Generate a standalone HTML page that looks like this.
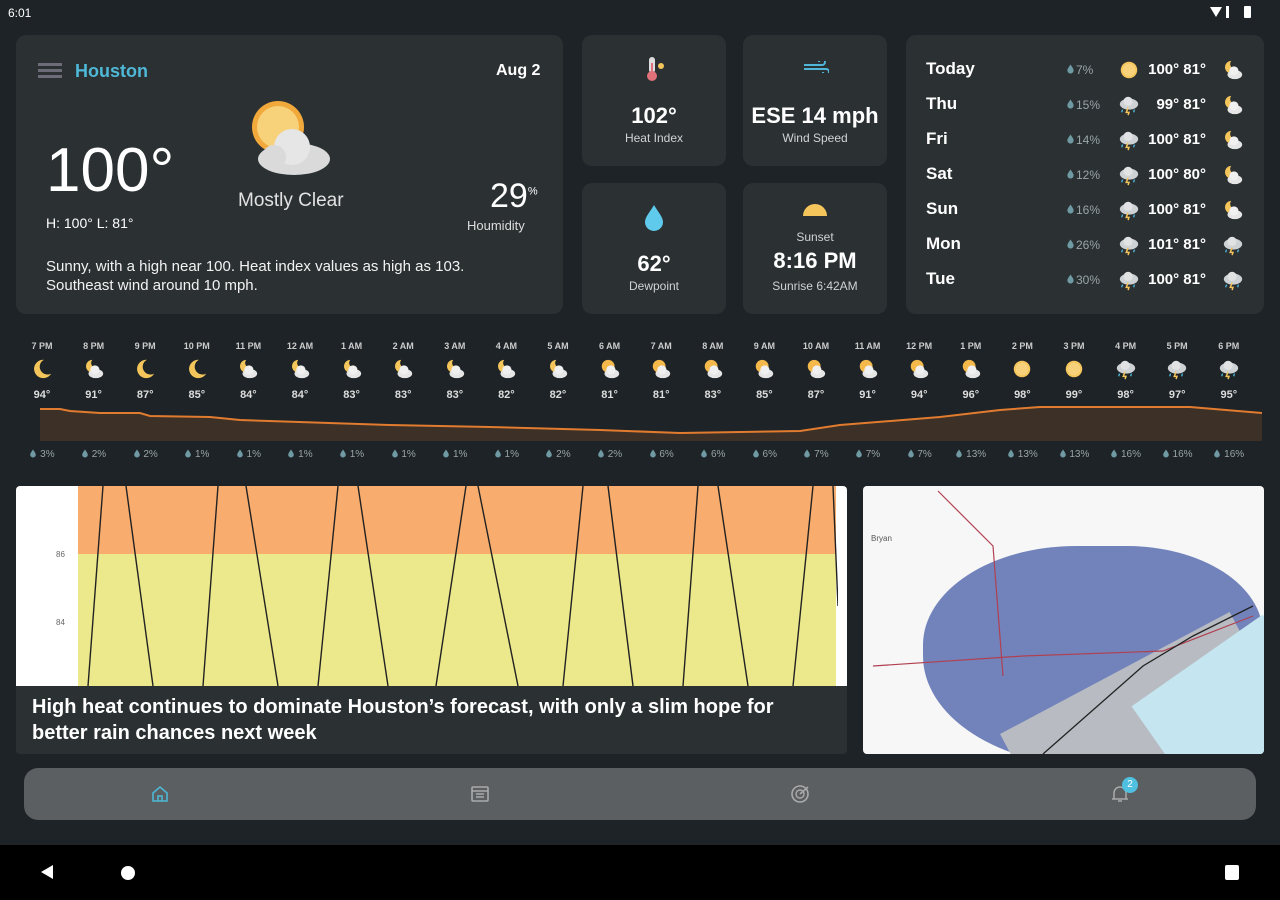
<!DOCTYPE html>
<html><head><meta charset="utf-8">
<style>
*{margin:0;padding:0;box-sizing:border-box}
body{width:1280px;height:900px;background:#1d2326;font-family:"Liberation Sans",sans-serif;color:#fff;position:relative;overflow:hidden}
.a{position:absolute}
.card{position:absolute;background:#2b3033;border-radius:10px}
.c{text-align:center}
.small{font-size:12px;color:#d0d3d4}
.hr{position:absolute;width:50px;text-align:center}
</style></head><body>
<svg width="0" height="0" style="position:absolute">
<defs>
<symbol id="moon" viewBox="0 0 24 24"><path d="M14 2a10 10 0 1 0 8 15A8 8 0 0 1 14 2z" fill="#f4c55b"/></symbol>
<symbol id="pc" viewBox="0 0 24 24"><path d="M10 2a7 7 0 1 0 7 9A6 6 0 0 1 10 2z" fill="#f4c55b"/><ellipse cx="14" cy="17" rx="8" ry="5" fill="#e6e6e6"/><circle cx="13" cy="13" r="5" fill="#f0f0f0"/></symbol>
<symbol id="ps" viewBox="0 0 24 24"><circle cx="10" cy="9" r="7" fill="#f4b94a"/><ellipse cx="14" cy="17" rx="8" ry="5" fill="#e6e6e6"/><circle cx="13" cy="13" r="5" fill="#f0f0f0"/></symbol>
<symbol id="sun" viewBox="0 0 24 24"><circle cx="12" cy="12" r="9" fill="#f4c55b"/><circle cx="12" cy="12" r="7" fill="#f8d27a"/></symbol>
<symbol id="st" viewBox="0 0 24 24"><ellipse cx="12" cy="11" rx="10" ry="6" fill="#cfd2d4"/><circle cx="11" cy="8" r="5" fill="#e0e2e3"/><path d="M11 15l-2 5h3l-1 3" stroke="#f4c55b" stroke-width="1.6" fill="none"/><path d="M5 17l-1 3M18 17l-1 3" stroke="#4fb6d8" stroke-width="1.5"/></symbol>
<symbol id="drop" viewBox="0 0 10 10"><path d="M5 0C3 3 1.5 5 1.5 6.5a3.5 3.5 0 0 0 7 0C8.5 5 7 3 5 0z" fill="#6f9aa3"/></symbol>
</defs></svg>

<!-- status bar -->
<div class="a" style="left:8px;top:6px;font-size:12px">6:01</div>
<div class="a" style="left:1210px;top:7px;width:12px;height:10px;background:#fff;clip-path:polygon(0 0,100% 0,50% 100%)"></div>
<div class="a" style="left:1226px;top:6px;width:3px;height:12px;background:#fff"></div>
<div class="a" style="left:1244px;top:6px;width:7px;height:12px;background:#fff;border-radius:1px"></div>

<!-- main card -->
<div class="card" style="left:16px;top:35px;width:547px;height:279px">
  <div class="a" style="left:22px;top:28px;width:24px;height:3px;background:#6e6b78;box-shadow:0 6px 0 #6e6b78,0 12px 0 #6e6b78"></div>
  <div class="a" style="left:59px;top:26px;font-size:18px;font-weight:bold;color:#4fb8d6">Houston</div>
  <div class="a" style="left:480px;top:27px;font-size:16px;font-weight:bold">Aug 2</div>
  <svg class="a" style="left:228px;top:60px" width="90" height="82" viewBox="0 0 90 82"><circle cx="34" cy="32" r="26" fill="#f1a93c"/><circle cx="34" cy="32" r="21" fill="#f8d27a"/><ellipse cx="50" cy="64" rx="36" ry="16" fill="#dadada"/><circle cx="48" cy="52" r="18" fill="#e6e6e6"/><circle cx="30" cy="62" r="12" fill="#dadada"/></svg>
  <div class="a" style="left:30px;top:100px;font-size:62px;font-weight:300">100°</div>
  <div class="a" style="left:30px;top:180px;font-size:14px">H: 100° L: 81°</div>
  <div class="a" style="left:222px;top:155px;font-size:19px;color:#e2e2e2">Mostly Clear</div>
  <div class="a" style="left:474px;top:142px;font-size:34px">29<sup style="font-size:11px">%</sup></div>
  <div class="a" style="left:451px;top:183px;font-size:13px;color:#ddd">Houmidity</div>
  <div class="a" style="left:30px;top:222px;font-size:15px;line-height:19px;color:#f2f2f2">Sunny, with a high near 100. Heat index values as high as 103.<br>Southeast wind around 10 mph.</div>
</div>

<!-- small cards -->
<div class="card" style="left:582px;top:35px;width:144px;height:131px">
  <svg class="a" style="left:60px;top:20px" width="24" height="28" viewBox="0 0 24 28"><rect x="7" y="2" width="6" height="16" rx="3" fill="#ddd"/><circle cx="10" cy="21" r="5" fill="#e0707a"/><rect x="9" y="8" width="2" height="12" fill="#e0707a"/><circle cx="19" cy="11" r="3" fill="#f4c55b"/></svg>
  <div class="a c" style="left:0;width:144px;top:68px;font-size:22px;font-weight:bold">102°</div>
  <div class="a c small" style="left:0;width:144px;top:96px">Heat Index</div>
</div>
<div class="card" style="left:743px;top:35px;width:144px;height:131px">
  <svg class="a" style="left:60px;top:26px" width="26" height="12" viewBox="0 0 26 12"><path d="M1 4h18a3 3 0 1 0-3-3M1 8h22a3 3 0 1 1-3 3" stroke="#4fb6d8" stroke-width="2" fill="none"/></svg>
  <div class="a c" style="left:0;width:144px;top:68px;font-size:22px;font-weight:bold">ESE 14 mph</div>
  <div class="a c small" style="left:0;width:144px;top:96px">Wind Speed</div>
</div>
<div class="card" style="left:582px;top:183px;width:144px;height:131px">
  <svg class="a" style="left:60px;top:20px" width="24" height="28" viewBox="0 0 24 28"><path d="M12 2C8 9 3 14 3 19a9 9 0 0 0 18 0c0-5-5-10-9-17z" fill="#5fcaeb"/></svg>
  <div class="a c" style="left:0;width:144px;top:68px;font-size:22px;font-weight:bold">62°</div>
  <div class="a c small" style="left:0;width:144px;top:96px">Dewpoint</div>
</div>
<div class="card" style="left:743px;top:183px;width:144px;height:131px">
  <svg class="a" style="left:59px;top:20px" width="26" height="14" viewBox="0 0 26 14"><path d="M1 13a12 12 0 0 1 24 0z" fill="#f4c55b"/></svg>
  <div class="a c small" style="left:0;width:144px;top:47px">Sunset</div>
  <div class="a c" style="left:0;width:144px;top:65px;font-size:22px;font-weight:bold">8:16 PM</div>
  <div class="a c small" style="left:0;width:144px;top:96px">Sunrise 6:42AM</div>
</div>

<!-- daily -->
<div class="card" style="left:906px;top:35px;width:358px;height:279px">
<div id="daily"></div>
</div>

<!-- hourly -->
<div id="hourly"></div>
<svg class="a" style="left:40px;top:405px" width="1222" height="36" viewBox="0 0 1222 36">
<path d="M0 4 L20 4 L30 6 L60 8 L100 8 L110 11 L170 12 L200 15 L350 20 L450 22 L560 25 L640 28 L760 26 L800 20 L900 12 L960 5 L1000 2 L1150 2 L1222 8 L1222 36 L0 36Z" fill="#3d3127"/>
<path d="M0 4 L20 4 L30 6 L60 8 L100 8 L110 11 L170 12 L200 15 L350 20 L450 22 L560 25 L640 28 L760 26 L800 20 L900 12 L960 5 L1000 2 L1150 2 L1222 8" stroke="#e17b2f" stroke-width="2" fill="none"/>
</svg>

<!-- chart card -->
<div class="card" style="left:16px;top:486px;width:831px;height:268px;border-radius:4px;overflow:hidden;background:#2b3033">
 <div class="a" style="left:0;top:0;width:831px;height:200px;background:#fff"></div>
 <div class="a" style="left:62px;top:0;width:758px;height:68px;background:#f8ad6e"></div>
 <div class="a" style="left:62px;top:68px;width:758px;height:132px;background:#ece98c"></div>
 <div class="a" style="left:40px;top:64px;font-size:8px;color:#666">86</div>
 <div class="a" style="left:40px;top:132px;font-size:8px;color:#666">84</div>
 <svg class="a" style="left:62px;top:0" width="760" height="200" viewBox="0 0 760 200"><g stroke="#222" stroke-width="1.4"><line x1="25" y1="0" x2="10" y2="200"/><line x1="48" y1="0" x2="75" y2="200"/><line x1="140" y1="0" x2="125" y2="200"/><line x1="168" y1="0" x2="200" y2="200"/><line x1="260" y1="0" x2="240" y2="200"/><line x1="280" y1="0" x2="310" y2="200"/><line x1="388" y1="0" x2="358" y2="200"/><line x1="400" y1="0" x2="440" y2="200"/><line x1="505" y1="0" x2="485" y2="200"/><line x1="530" y1="0" x2="555" y2="200"/><line x1="620" y1="0" x2="605" y2="200"/><line x1="640" y1="0" x2="670" y2="200"/><line x1="735" y1="0" x2="715" y2="200"/><line x1="755" y1="0" x2="760" y2="120"/></g></svg>
 <div class="a" style="left:16px;top:208px;font-size:20px;font-weight:bold;line-height:26px;width:800px">High heat continues to dominate Houston’s forecast, with only a slim hope for better rain chances next week</div>
</div>

<!-- map -->
<div class="a" style="left:863px;top:486px;width:401px;height:268px;background:#f7f7f7;border-radius:4px;overflow:hidden">
 <div class="a" style="left:60px;top:60px;width:340px;height:220px;background:#5a6fb0;border-radius:45% 40% 30% 50%;opacity:.85"></div>
 <div class="a" style="left:150px;top:180px;width:260px;height:120px;background:#b8bcc2;transform:rotate(-28deg)"></div>
 <div class="a" style="left:300px;top:160px;width:160px;height:160px;background:#c5e6f0;transform:rotate(-35deg)"></div>
 <svg class="a" style="left:0;top:0" width="401" height="268"><path d="M75 5 L130 60 L140 190" stroke="#b04050" stroke-width="1.2" fill="none"/><path d="M10 180 L160 170 L300 165 L390 130" stroke="#b04050" stroke-width="1.2" fill="none"/><path d="M180 268 L280 180 L330 150 L390 120" stroke="#222" stroke-width="1.3" fill="none"/></svg>
 <div class="a" style="left:8px;top:48px;font-size:8px;color:#555">Bryan</div>
</div>

<!-- bottom nav -->
<div class="a" style="left:24px;top:768px;width:1232px;height:52px;background:#5b5f61;border-radius:14px"></div>
<svg class="a" style="left:150px;top:784px" width="20" height="20" viewBox="0 0 20 20"><path d="M3 9 L10 3 L17 9 V17 H3Z M8 17 V12 H12 V17" stroke="#4fb8d6" stroke-width="1.6" fill="none"/></svg>
<svg class="a" style="left:470px;top:784px" width="20" height="20" viewBox="0 0 20 20"><rect x="2" y="3" width="16" height="14" rx="1" stroke="#aaa" stroke-width="1.6" fill="none"/><path d="M2 7h16M6 10h8M6 13h8" stroke="#aaa" stroke-width="1.4"/></svg>
<svg class="a" style="left:790px;top:784px" width="20" height="20" viewBox="0 0 20 20"><circle cx="10" cy="10" r="8" stroke="#aaa" stroke-width="1.6" fill="none"/><circle cx="10" cy="10" r="4" stroke="#aaa" stroke-width="1.4" fill="none"/><path d="M10 10 L18 3" stroke="#aaa" stroke-width="1.6"/></svg>
<svg class="a" style="left:1110px;top:784px" width="20" height="20" viewBox="0 0 20 20"><path d="M4 15 V9 a6 6 0 0 1 12 0 V15 Z M2 15 H18 M8 17 H12" stroke="#aaa" stroke-width="1.5" fill="none"/></svg>
<div class="a" style="left:1122px;top:777px;width:16px;height:16px;border-radius:50%;background:#4fc0e0;font-size:10px;text-align:center;line-height:16px">2</div>

<!-- nav bar -->
<div class="a" style="left:0;top:845px;width:1280px;height:55px;background:#000"></div>
<div class="a" style="left:41px;top:865px;width:12px;height:14px;background:#fff;clip-path:polygon(100% 0,100% 100%,0 50%)"></div>
<div class="a" style="left:121px;top:866px;width:14px;height:14px;border-radius:50%;background:#fff"></div>
<div class="a" style="left:1225px;top:865px;width:14px;height:15px;background:#fff;border-radius:2px"></div>

<script>
var d=[["Today","7%","sun","100° 81°","pc"],["Thu","15%","st","99° 81°","pc"],["Fri","14%","st","100° 81°","pc"],["Sat","12%","st","100° 80°","pc"],["Sun","16%","st","100° 81°","pc"],["Mon","26%","st","101° 81°","st"],["Tue","30%","st","100° 81°","st"]];
var h="";d.forEach(function(r,i){var y=24+i*35;
h+='<div class="a" style="left:20px;top:'+y+'px;font-size:17px;font-weight:bold">'+r[0]+'</div>'+
'<svg class="a" style="left:160px;top:'+(y+5)+'px" width="9" height="10"><use href="#drop"/></svg>'+
'<div class="a" style="left:170px;top:'+(y+4)+'px;font-size:12px;color:#9aa5a8">'+r[1]+'</div>'+
'<svg class="a" style="left:212px;top:'+(y)+'px" width="22" height="22"><use href="#'+r[2]+'"/></svg>'+
'<div class="a" style="left:232px;top:'+(y+2)+'px;width:68px;text-align:right;font-size:15px;font-weight:bold">'+r[3]+'</div>'+
'<svg class="a" style="left:316px;top:'+(y)+'px" width="22" height="22"><use href="#'+r[4]+'"/></svg>';});
document.getElementById("daily").innerHTML=h;
var t=["7 PM","8 PM","9 PM","10 PM","11 PM","12 AM","1 AM","2 AM","3 AM","4 AM","5 AM","6 AM","7 AM","8 AM","9 AM","10 AM","11 AM","12 PM","1 PM","2 PM","3 PM","4 PM","5 PM","6 PM"];
var tp=[94,91,87,85,84,84,83,83,83,82,82,81,81,83,85,87,91,94,96,98,99,98,97,95];
var p=[3,2,2,1,1,1,1,1,1,1,2,2,6,6,6,7,7,7,13,13,13,16,16,16];
var ic=["moon","pc","moon","moon","pc","pc","pc","pc","pc","pc","pc","ps","ps","ps","ps","ps","ps","ps","ps","sun","sun","st","st","st"];
h="";t.forEach(function(s,i){var x=17+i*51.6;
h+='<div class="hr" style="left:'+x+'px;top:341px;font-size:9px;font-weight:bold;color:#ccc">'+s+'</div>'+
'<svg class="a" style="left:'+(x+14)+'px;top:358px" width="22" height="22"><use href="#'+ic[i]+'"/></svg>'+
'<div class="hr" style="left:'+x+'px;top:389px;font-size:11px;font-weight:bold;color:#ddd">'+tp[i]+'°</div>'+
'<div class="hr" style="left:'+x+'px;top:449px;font-size:10px;color:#9aa5a8"><svg width="8" height="9" style="vertical-align:-1px"><use href="#drop"/></svg> '+p[i]+'%</div>';});
document.getElementById("hourly").innerHTML=h;
</script>
</body></html>
